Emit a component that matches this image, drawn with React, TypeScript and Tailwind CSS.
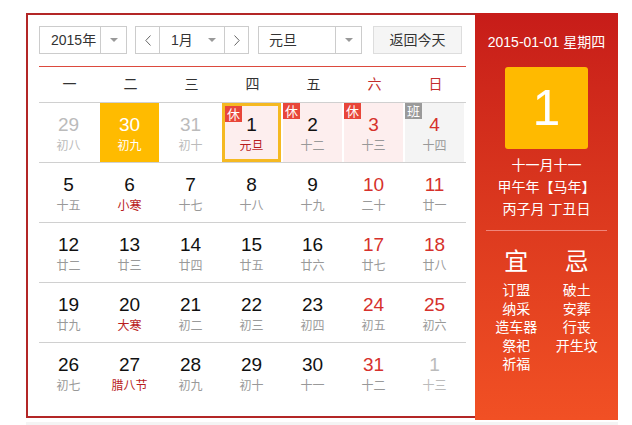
import React from "react";

type Day = {
  d: number;
  lunar: string;
  muted?: boolean;
  term?: boolean;
  selected?: boolean;
  today?: boolean;
  tag?: "休" | "班";
};

const weeks: Day[][] = [
  [
    { d: 29, lunar: "初八", muted: true },
    { d: 30, lunar: "初九", selected: true },
    { d: 31, lunar: "初十", muted: true },
    { d: 1, lunar: "元旦", term: true, today: true, tag: "休" },
    { d: 2, lunar: "十二", tag: "休" },
    { d: 3, lunar: "十三", tag: "休" },
    { d: 4, lunar: "十四", tag: "班" },
  ],
  [
    { d: 5, lunar: "十五" },
    { d: 6, lunar: "小寒", term: true },
    { d: 7, lunar: "十七" },
    { d: 8, lunar: "十八" },
    { d: 9, lunar: "十九" },
    { d: 10, lunar: "二十" },
    { d: 11, lunar: "廿一" },
  ],
  [
    { d: 12, lunar: "廿二" },
    { d: 13, lunar: "廿三" },
    { d: 14, lunar: "廿四" },
    { d: 15, lunar: "廿五" },
    { d: 16, lunar: "廿六" },
    { d: 17, lunar: "廿七" },
    { d: 18, lunar: "廿八" },
  ],
  [
    { d: 19, lunar: "廿九" },
    { d: 20, lunar: "大寒", term: true },
    { d: 21, lunar: "初二" },
    { d: 22, lunar: "初三" },
    { d: 23, lunar: "初四" },
    { d: 24, lunar: "初五" },
    { d: 25, lunar: "初六" },
  ],
  [
    { d: 26, lunar: "初七" },
    { d: 27, lunar: "腊八节", term: true },
    { d: 28, lunar: "初九" },
    { d: 29, lunar: "初十" },
    { d: 30, lunar: "十一" },
    { d: 31, lunar: "十二" },
    { d: 1, lunar: "十三", muted: true },
  ],
];

const weekdays = ["一", "二", "三", "四", "五", "六", "日"];
const yi = ["订盟", "纳采", "造车器", "祭祀", "祈福"];
const ji = ["破土", "安葬", "行丧", "开生坟"];

function Caret() {
  return (
    <svg width="8" height="4" viewBox="0 0 8 4">
      <path d="M0 0h8L4 4z" fill="#999" />
    </svg>
  );
}

function Chevron({ dir }: { dir: "l" | "r" }) {
  return (
    <svg width="6" height="11" viewBox="0 0 6 11">
      <path
        d={dir === "l" ? "M5.5 0.5L0.8 5.5l4.7 5" : "M0.5 0.5l4.7 5-4.7 5"}
        fill="none"
        stroke="#666"
        strokeWidth="1"
      />
    </svg>
  );
}

function Cell({ day, col }: { day: Day; col: number }) {
  const weekend = col >= 5;
  let bg = "";
  if (day.selected) bg = "bg-[#ffbb00]";
  else if (day.tag === "休") bg = "bg-[#fdeeee]";
  else if (day.tag === "班") bg = "bg-[#f4f4f4]";

  let numColor = "text-[#111]";
  if (day.selected) numColor = "text-white";
  else if (day.muted) numColor = "text-[#bbb]";
  else if (weekend) numColor = "text-[#d6312c]";

  let lunarColor = "text-[#999]";
  if (day.selected) lunarColor = "text-white";
  else if (day.muted) lunarColor = "text-[#bbb]";
  else if (day.term) lunarColor = "text-[#b81c1c]";

  return (
    <div
      className={`relative h-full w-[59px] ${bg} ${
        day.today ? "border-[3px] border-[#f5b922] pt-[8px]" : "pt-[11px]"
      } flex flex-col items-center`}
    >
      {day.tag ? (
        <span
          className={`absolute left-[0px] top-[0px] flex h-[16px] w-[17px] items-center justify-center text-[13px] leading-none text-white ${
            day.tag === "休" ? "bg-[#e8463a]" : "bg-[#9a9a9a]"
          } ${day.today ? "-left-[3px] -top-[3px]" : ""}`}
        >
          {day.tag}
        </span>
      ) : null}
      <span className={`text-[19px] leading-[22px] ${numColor}`}>{day.d}</span>
      <span className={`mt-[2px] text-[12px] leading-[16px] ${lunarColor}`}>{day.lunar}</span>
    </div>
  );
}

export default function App() {
  return (
    <div
      className="min-h-[425px] bg-white pl-[26px] pt-[13px] text-[#333]"
      style={{ fontFamily: '"Liberation Sans", "Noto Sans CJK SC", sans-serif' }}
    >
      <div className="flex w-[592px]">
        <div className="h-[405px] w-[449px] border-2 border-r-0 border-[#b32626] pl-[11px] pr-[9px] pt-[11px]">
          <div className="flex h-[28px] text-[14px]">
            <div className="flex h-full w-[88px] items-center border border-[#ccc]">
              <span className="flex-1 pl-[11px]">2015年</span>
              <span className="flex h-full w-[26px] items-center justify-center border-l border-[#ccc]">
                <Caret />
              </span>
            </div>
            <div className="ml-[8px] flex h-full w-[114px]">
              <span className="flex h-full w-[25px] items-center justify-center border border-[#ccc]">
                <Chevron dir="l" />
              </span>
              <span className="flex h-full flex-1 items-center border-y border-[#ccc] pl-[11px] pr-[8px]">
                <span className="flex-1">1月</span>
                <Caret />
              </span>
              <span className="flex h-full w-[25px] items-center justify-center border border-[#ccc]">
                <Chevron dir="r" />
              </span>
            </div>
            <div className="ml-[9px] flex h-full w-[104px] items-center border border-[#ccc]">
              <span className="flex-1 pl-[10px]">元旦</span>
              <span className="flex h-full w-[26px] items-center justify-center border-l border-[#ccc]">
                <Caret />
              </span>
            </div>
            <div className="ml-[11px] flex h-full w-[89px] items-center justify-center border border-[#ddd] bg-[#f5f5f5]">
              返回今天
            </div>
          </div>

          <div className="mt-[12px] grid h-[37px] grid-cols-7 items-center border-t border-b border-[#d0d0d0] border-t-[#dc4a3e] text-[14px]">
            {weekdays.map((w, i) => (
              <span key={w} className={`text-center ${i >= 5 ? "text-[#c42e2e]" : "text-[#333]"}`}>
                {w}
              </span>
            ))}
          </div>

          {weeks.map((week, r) => (
            <div
              key={r}
              className={`grid h-[60px] grid-cols-7 ${r < weeks.length - 1 ? "border-b border-[#d0d0d0]" : ""}`}
            >
              {week.map((day, c) => (
                <Cell key={c} day={day} col={c} />
              ))}
            </div>
          ))}
        </div>

        <div className="flex h-[407px] w-[143px] flex-col items-center bg-linear-to-b from-[#c71c19] to-[#f15024] pt-[19px] text-white">
          <div className="text-[14px] leading-[20px]">2015-01-01 星期四</div>
          <div className="mt-[15px] flex h-[82px] w-[83px] items-center justify-center rounded-[3px] bg-[#ffba00] text-[50px] leading-none">
            1
          </div>
          <div className="mt-[5px] text-center text-[14px] leading-[22px]">
            <div>十一月十一</div>
            <div>甲午年【马年】</div>
            <div>丙子月 丁丑日</div>
          </div>
          <div className="mt-[10px] h-px w-[121px] bg-[#f0857a]" />
          <div className="mt-[17px] grid w-[121px] grid-cols-2 text-center">
            <div>
              <div className="text-[24px] leading-[28px]">宜</div>
              <div className="mt-[5px] text-[14px] leading-[18.6px]">
                {yi.map((t) => (
                  <div key={t}>{t}</div>
                ))}
              </div>
            </div>
            <div>
              <div className="text-[24px] leading-[28px]">忌</div>
              <div className="mt-[5px] text-[14px] leading-[18.6px]">
                {ji.map((t) => (
                  <div key={t}>{t}</div>
                ))}
              </div>
            </div>
          </div>
        </div>
      </div>
      <div className="mt-[2px] h-[5px] w-[592px] bg-[#f4f4f4]" />
    </div>
  );
}
